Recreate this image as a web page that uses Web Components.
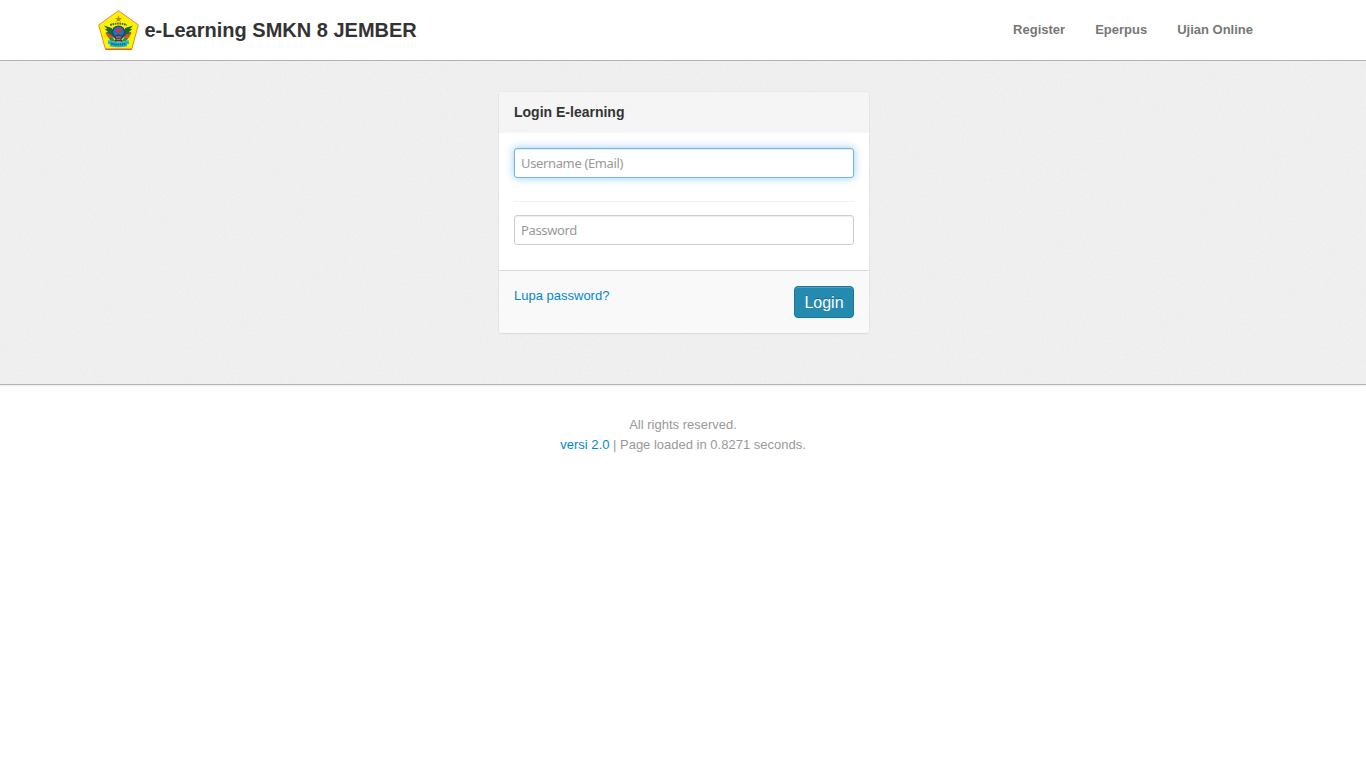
<!DOCTYPE html>
<html lang="id">
<head>
<meta charset="utf-8">
<title>e-Learning SMKN 8 JEMBER</title>
<style>
body{margin:0;background:#fff;color:#333;font:13px/20px "Liberation Sans",Arial,sans-serif}
</style>
</head>
<body>
<site-header>
  <nav-link>Register</nav-link><nav-link>Eperpus</nav-link><nav-link>Ujian Online</nav-link>
</site-header>
<page-band>
  <login-card>
    <span slot="title">Login E-learning</span>
    <text-field active placeholder="Username (Email)"></text-field>
    <text-field divided type="password" placeholder="Password"></text-field>
    <text-link slot="footer">Lupa password?</text-link>
    <submit-button slot="footer">Login</submit-button>
  </login-card>
</page-band>
<site-footer></site-footer>
<script>
const define = (name, html, setup) => {
  const t = document.createElement('template');
  t.innerHTML = html;
  customElements.define(name, class extends HTMLElement {
    constructor() {
      super();
      this.attachShadow({mode: 'open'}).append(t.content.cloneNode(true));
    }
    connectedCallback() { if (setup) setup(this, this.shadowRoot); }
  });
};

define('school-logo', `
<style>:host{display:block;width:41px;height:40px}svg{display:block}</style>
<svg width="41" height="40" viewBox="0 0 42 41" preserveAspectRatio="none">
  <path d="M21 .7 41.3 15.3 34.6 40.2H7.6L.7 15.3Z" fill="#fff200" stroke="#d98a3c" stroke-width="1"/>
  <path d="M7.6 40.2h27" stroke="#c4472a" stroke-width="1"/>
  <path d="m21 5.6 1 2.5 2.7.1-2.1 1.6.7 2.5-2.3-1.4-2.3 1.4.7-2.5-2.1-1.6 2.7-.1Z" fill="#b98a12"/>
  <path d="M12.5 15.4Q21 12.4 29.6 15.4" fill="none" stroke="#4c6340" stroke-width="2" stroke-dasharray="1.7 .7"/>
  <path d="M6 16 14 18.5l3 9.5-6-2-3-3.4 2.6.3-4-3.8 3 .6Z" fill="#17683b"/>
  <path d="M36 16 28 18.5l-3 9.5 6-2 3-3.4-2.6.3 4-3.8-3 .6Z" fill="#17683b"/>
  <path d="m7.5 23.4 5.5 1.5 3 4.2-6-1.5Z" fill="#e04b28"/>
  <path d="m34.5 23.4-5.5 1.5-3 4.2 6-1.5Z" fill="#e04b28"/>
  <path d="m10 27.8 5 1 4 4-6-1.4ZM32 27.8l-5 1-4 4 6-1.4Z" fill="#318b49"/>
  <circle cx="21" cy="23" r="7.2" fill="#22496f"/>
  <circle cx="21" cy="22.4" r="5.4" fill="#1978bd"/>
  <path d="m18 18 3 2 3.2-2-.8 4-2.3 2.2-2.3-2.4Z" fill="#ec2837"/>
  <path d="M15.6 26.9 21 24.9l5.4 2-2.3 2.9 1 2.6h-8.2l1-2.6Z" fill="#3d3b63"/>
  <path d="M18.3 27.7h5.4M19 30h4" stroke="#c8c5a7" stroke-width=".7"/>
  <path d="m10.7 30.7 3 1.1q7.3 2.6 14.6 0l3-1.1.7 4-2.3.4.3 2.1q-9 2.2-18 0l.3-2.1-2.3-.4Z" fill="#1cb5da"/>
  <path d="M13.5 34.4q7.5 2.2 15 0" fill="none" stroke="#245e72" stroke-width="2" stroke-dasharray="1.5 .7"/>
</svg>`);

define('nav-link', `
<style>:host{display:block;color:#777;font-weight:bold}</style><slot></slot>`);

define('site-header', `
<style>
:host{display:block;background:#fff;border-bottom:1px solid #b2b2b2}
.in{box-sizing:border-box;height:60px;width:1170px;margin:0 auto;padding-right:15px;display:flex;align-items:center;justify-content:space-between}
.brand{display:flex;align-items:center;font:bold 20px/20px "Liberation Sans",Arial,sans-serif;color:#333}
.brand span{padding-left:5.5px}
nav{display:flex;gap:30px}
</style>
<div class="in"><div class="brand"><school-logo></school-logo><span>e-Learning SMKN 8 JEMBER</span></div><nav><slot></slot></nav></div>`);

define('page-band', `
<style>
:host{display:block;position:relative;box-sizing:border-box;height:324px;padding-top:31px;background:#f0f0f0;border-bottom:1px solid #b2b2b2;box-shadow:0 1px 2px rgba(0,0,0,.08)}
svg{position:absolute;inset:0;width:100%;height:100%}
.c{position:relative;width:370px;margin:0 auto;left:1px}
</style>
<svg aria-hidden="true"><filter id="n"><feTurbulence type="fractalNoise" baseFrequency=".45" numOctaves="2" seed="4"/><feColorMatrix values="0 0 0 0 .4  0 0 0 0 .4  0 0 0 0 .4  .10 0 0 0 -.035"/></filter><rect width="100%" height="100%" filter="url(#n)"/></svg>
<div class="c"><slot></slot></div>`);

define('login-card', `
<style>
:host{display:block;background:#fff;border-radius:3px;box-shadow:0 0 0 1px rgba(0,0,0,.025),0 1px 2px rgba(0,0,0,.07);overflow:hidden}
h3{margin:0;padding:10px 15px 11px;background:#f5f5f5;font-size:14px;line-height:20px;color:#333}
.body{height:122px;padding:15px 15px 0}
footer{box-sizing:border-box;height:63px;padding:15px;background:#f9f9f9;border-top:1px solid #d9d9d9;display:flex;justify-content:space-between;align-items:flex-start}
</style>
<h3><slot name="title"></slot></h3><div class="body"><slot></slot></div><footer><slot name="footer"></slot></footer>`);

define('text-field', `
<style>
:host{display:block}
:host([divided]){border-top:1px solid #f2f2f2;margin-top:23px;padding-top:13px}
input{display:block;box-sizing:border-box;width:100%;height:30px;margin:0;padding:4px 6px;border:1px solid #ccc;border-radius:3px;background:#fff;color:#555;font:13px/20px "Noto Sans","Open Sans",sans-serif;letter-spacing:-.36px;outline:0;box-shadow:inset 0 1px 1px rgba(0,0,0,.075)}
input::placeholder{color:#999;opacity:1}
:host([active]) input{border-color:#70b5ed;box-shadow:inset 0 1px 1px rgba(0,0,0,.075),0 0 8px rgba(82,168,236,.6)}
</style><input>`, (el, root) => {
  const i = root.querySelector('input');
  i.type = el.getAttribute('type') || 'text';
  i.placeholder = el.getAttribute('placeholder');
});

define('text-link', `<style>:host{display:inline-block;color:#08c}</style><slot></slot>`);

define('submit-button', `
<style>
:host{display:block}
button{display:block;box-sizing:border-box;width:60px;height:32px;margin:0;padding:2px 0 0;border:1px solid #1c7796;border-radius:4px;background:#248aaf;color:#fff;font:16px/20px "Liberation Sans",Arial,sans-serif;text-shadow:0 -1px 0 rgba(0,0,0,.25);box-shadow:inset 0 1px 0 rgba(255,255,255,.2),0 1px 2px rgba(0,0,0,.05)}
</style><button><slot></slot></button>`);

define('site-footer', `
<style>:host{display:block;padding-top:30px;text-align:center;color:#999}</style>
<div>All rights reserved.</div><div><text-link>versi 2.0</text-link> | Page loaded in 0.8271 seconds.</div>`);
</script>
</body>
</html>
